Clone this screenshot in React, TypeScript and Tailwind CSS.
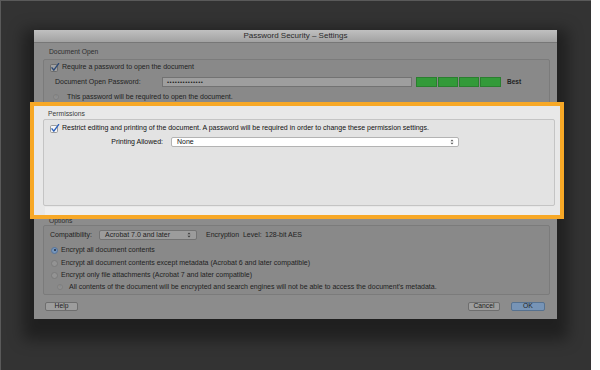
import React from "react";

function Check({ dim }: { dim?: boolean }) {
  return (
    <svg width="10" height="9" viewBox="0 0 10 9" className="shrink-0">
      <rect x="0.5" y="1.5" width="7" height="7" rx="1.2" fill={dim ? "#a2a2a2" : "#f7f7f7"} stroke={dim ? "#6c6c6c" : "#9c9c9c"} />
      <path d="M2 4.8 L3.8 7.2 L8.6 0.6" fill="none" stroke={dim ? "#2b4874" : "#2b5fb9"} strokeWidth="1.4" strokeLinecap="round" strokeLinejoin="round" />
    </svg>
  );
}

function Radio({ on }: { on?: boolean }) {
  return (
    <span
      className={
        on
          ? "w-[7px] h-[7px] rounded-full border border-[#56739a] bg-[#7596bd] flex items-center justify-center shrink-0"
          : "w-[7px] h-[7px] rounded-full border border-[#7b7b7b] bg-[#939393] shrink-0"
      }
    >
      {on && <span className="w-[2px] h-[2px] rounded-full bg-[#1c2b40]" />}
    </span>
  );
}

function Info() {
  return (
    <span className="w-[6px] h-[6px] rounded-full border border-[#7f7f7f] bg-[#909090] flex items-center justify-center text-[4px] leading-none text-[#6f6f6f] shrink-0">
      !
    </span>
  );
}

function Arrows({ color }: { color: string }) {
  return (
    <svg width="4" height="6" viewBox="0 0 4 6" className="shrink-0">
      <path d="M0.5 2.3 L2 0.6 L3.5 2.3 Z M0.5 3.7 L2 5.4 L3.5 3.7 Z" fill={color} />
    </svg>
  );
}

export default function App() {
  return (
    <div className="w-[600px] h-[370px] bg-white flex font-['Liberation_Sans',Arial,sans-serif]">
      <div className="w-[591px] h-[370px] bg-[#333333] border-l border-t border-[#5a5a5a] pt-[29px] pl-[33px]">
        {/* window */}
        <div className="w-[523px] h-[289px] bg-[#8c8c8c] flex flex-col shadow-[0_10px_14px_11px_rgba(0,0,0,0.38)]">
          {/* title bar */}
          <div className="h-[13px] shrink-0 bg-gradient-to-b from-[#c0c0c0] to-[#a2a2a2] border-b border-[#777777] flex items-center justify-center text-[8px] text-[#2a2a2a]">
            Password Security – Settings
          </div>

          {/* Document Open */}
          <div className="h-[8px] mt-[5px] ml-[15px] flex items-center text-[6.75px] text-[#2e2e2e]">Document Open</div>
          <div className="mt-[3px] ml-[9px] mr-[7px] h-[46px] border border-[#7b7b7b] bg-[#898989] rounded-[2px] text-[7px] text-[#222222] pt-[3px]">
            <div className="h-[8px] flex items-center pl-[6px] gap-[2px]">
              <Check dim />
              <span>Require a password to open the document</span>
            </div>
            <div className="h-[10px] mt-[6px] flex items-center pl-[11px]">
              <span className="w-[107px]">Document Open Password:</span>
              <div className="w-[250px] h-[10px] bg-[#9e9e9e] border border-[#727272] flex items-center pl-[4px] text-[6px] tracking-[0.5px] text-[#1e1e1e]">
                ••••••••••••••
              </div>
              <div className="ml-[4px] flex gap-[1px]">
                <div className="w-[21px] h-[10px] bg-[#339a39] border border-[#2a7f2f]" />
                <div className="w-[20px] h-[10px] bg-[#339a39] border border-[#2a7f2f]" />
                <div className="w-[20px] h-[10px] bg-[#339a39] border border-[#2a7f2f]" />
                <div className="w-[21px] h-[10px] bg-[#339a39] border border-[#2a7f2f]" />
              </div>
              <span className="ml-[6px] font-bold text-[6.5px]">Best</span>
            </div>
            <div className="h-[8px] mt-[6px] flex items-center pl-[9px] gap-[8px]">
              <Info />
              <span>This password will be required to open the document.</span>
            </div>
          </div>

          {/* Permissions highlight */}
          <div className="relative z-10 mt-[-3px] ml-[-4px] mr-[-7px] h-[117px] border-[4px] border-[#f7a826] bg-[#e8e8e8] flex flex-col">
            <div className="h-[8px] mt-[4px] ml-[14px] flex items-center text-[6.75px] text-[#3a3a3a]">Permissions</div>
            <div className="mt-[1px] ml-[9px] mr-[5px] h-[87px] border border-[#c4c4c4] bg-[#e3e3e3] rounded-[2px] text-[7px] text-[#111111] pt-[4px]">
              <div className="h-[8px] flex items-center pl-[6px] gap-[2px]">
                <Check />
                <span>Restrict editing and printing of the document. A password will be required in order to change these permission settings.</span>
              </div>
              <div className="h-[10px] mt-[5px] flex items-center">
                <span className="w-[127px] text-right pr-[8px]">Printing Allowed:</span>
                <div className="w-[288px] h-[10px] bg-white border border-[#b3b3b3] rounded-[2px] flex items-center justify-between pl-[5px] pr-[4px]">
                  <span>None</span>
                  <Arrows color="#555555" />
                </div>
              </div>
            </div>
            <div className="mt-[1px] ml-[11px] w-[495px] h-[8px] bg-[#efefef]" />
          </div>

          {/* Options */}
          <div className="h-[8px] mt-[-2px] ml-[15px] flex items-center text-[6.75px] text-[#2e2e2e]">Options</div>
          <div className="ml-[9px] mr-[7px] h-[70px] border border-[#7b7b7b] bg-[#898989] rounded-[2px] text-[7px] text-[#222222] pt-[4px]">
            <div className="h-[10px] flex items-center pl-[6px]">
              <span className="w-[49px]">Compatibility:</span>
              <div className="w-[98px] h-[10px] bg-[#9c9c9c] border border-[#737373] rounded-[2px] flex items-center justify-between pl-[5px] pr-[5px]">
                <span>Acrobat 7.0 and later</span>
                <Arrows color="#3a3a3a" />
              </div>
              <span className="ml-[9px] w-[59px]">Encryption&nbsp; Level:</span>
              <span>128-bit AES</span>
            </div>
            <div className="h-[8px] mt-[6px] flex items-center pl-[7px] gap-[3px]">
              <Radio on />
              <span>Encrypt all document contents</span>
            </div>
            <div className="h-[8px] mt-[5px] flex items-center pl-[7px] gap-[3px]">
              <Radio />
              <span>Encrypt all document contents except metadata (Acrobat 6 and later compatible)</span>
            </div>
            <div className="h-[8px] mt-[4px] flex items-center pl-[7px] gap-[3px]">
              <Radio />
              <span>Encrypt only file attachments (Acrobat 7 and later compatible)</span>
            </div>
            <div className="h-[8px] mt-[4px] flex items-center pl-[13px] gap-[6px]">
              <Info />
              <span>All contents of the document will be encrypted and search engines will not be able to access the document’s metadata.</span>
            </div>
          </div>

          {/* buttons */}
          <div className="mt-[7px] h-[9px] flex items-center text-[6.75px] text-[#222222]">
            <div className="ml-[11px] w-[33px] h-[9px] rounded-[2px] border border-[#6e6e6e] bg-[#9d9d9d] flex items-center justify-center">Help</div>
            <div className="ml-auto w-[32px] h-[9px] rounded-[2px] border border-[#6e6e6e] bg-[#9d9d9d] flex items-center justify-center">Cancel</div>
            <div className="ml-[11px] mr-[12px] w-[34px] h-[9px] rounded-[2px] border border-[#56718f] bg-[#7794b6] flex items-center justify-center">OK</div>
          </div>
        </div>
      </div>
    </div>
  );
}
